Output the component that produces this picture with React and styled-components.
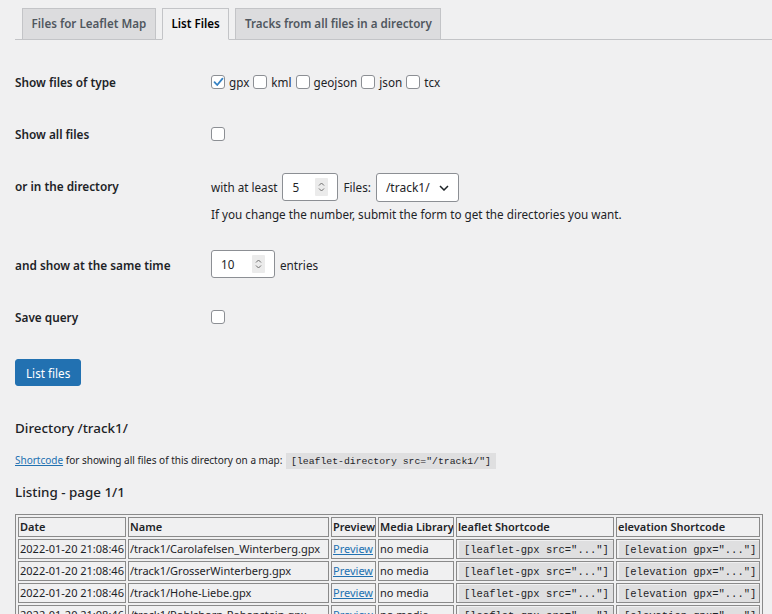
import React from "react";
import styled, { createGlobalStyle } from "styled-components";

const Global = createGlobalStyle`
  html, body { margin: 0; background: #f0f0f1; }
  body {
    font-family: "Noto Sans", "Open Sans", sans-serif;
    color: #1d2327;
    font-size: 11.7px;
  }
  * { box-sizing: border-box; }
`;

const Page = styled.div`
  padding: 8px 9px 40px 15px;
`;

const TabBar = styled.nav`
  display: flex;
  gap: 6px;
  padding-left: 7px;
  margin-right: -9px;
  border-bottom: 1px solid #c3c4c7;
`;

const Tab = styled.a`
  display: block;
  margin-bottom: -1px;
  padding: 4px 8.6px;
  line-height: 22px;
  font-size: 11.6px;
  font-weight: 600;
  text-decoration: none;
  border: 1px solid #c3c4c7;
  border-bottom-color: ${(p) => (p.$active ? "#f0f0f1" : "#c3c4c7")};
  background: ${(p) => (p.$active ? "#f0f0f1" : "#dcdcde")};
  color: ${(p) => (p.$active ? "#000" : "#50575e")};
`;

const Form = styled.form`
  margin-top: 16px;
`;

const Row = styled.div`
  display: grid;
  grid-template-columns: 196px 1fr;
  align-items: start;
  padding: 11px 0;
`;

const Label = styled.div`
  font-size: 11.8px;
  font-weight: 600;
  line-height: 30px;
`;

const Line = styled.div`
  display: flex;
  align-items: center;
  gap: ${(p) => p.$gap ?? 5}px;
  min-height: 30px;
`;

const Help = styled.p`
  margin: 1px 0 3px;
  line-height: 22px;
`;

const CheckLabel = styled.label`
  display: inline-flex;
  align-items: center;
  gap: 4px;
  line-height: 18px;
`;

const Box = styled.span`
  display: inline-flex;
  align-items: center;
  justify-content: center;
  width: 14px;
  height: 14px;
  background: #fff;
  border: 1px solid #8c8f94;
  border-radius: 3px;
`;

const NumberBox = styled.span`
  display: inline-flex;
  align-items: center;
  justify-content: space-between;
  width: ${(p) => p.$w}px;
  height: 28px;
  margin-top: ${(p) => p.$mt ?? 0}px;
  padding: 0 9px;
  background: #fff;
  border: 1px solid #8c8f94;
  border-radius: 3px;
`;

const Spinner = styled.span`
  display: inline-flex;
  align-items: center;
  justify-content: center;
  width: 13px;
  height: 18px;
  background: #ebebeb;
  border-radius: 1px;
`;

const SelectBox = styled.span`
  display: inline-flex;
  align-items: center;
  justify-content: space-between;
  width: 83px;
  height: 29px;
  margin-top: 2px;
  padding: 0 9px;
  background: #fff;
  border: 1px solid #8c8f94;
  border-radius: 3px;
  font-size: 12px;
`;

const Button = styled.button`
  display: block;
  margin-top: 16px;
  height: 27px;
  padding: 0 10px;
  background: #2271b1;
  border: 1px solid #2271b1;
  border-radius: 3px;
  color: #fff;
  font-family: "Noto Sans", sans-serif;
  font-size: 11.7px;
`;

const Heading = styled.h2`
  margin: ${(p) => p.$mt}px 0 0;
  font-size: 13.4px;
  font-weight: 500;
  line-height: 20px;
  color: #1d2327;
`;

const Note = styled.p`
  margin: 13px 0 0;
  font-size: 10px;
  line-height: 18px;
`;

const Link = styled.a`
  color: #2271b1;
  text-decoration: underline;
`;

const Code = styled.code`
  font-family: "Liberation Mono", monospace;
  font-size: ${(p) => p.$size}px;
  line-height: 1;
  background: rgba(0, 0, 0, 0.07);
  padding: 3px 5px 2px;
  margin: 0 1px;
`;

const Table = styled.table`
  margin-top: 12px;
  width: 748px;
  table-layout: fixed;
  border-collapse: separate;
  border-spacing: 2px;
  border: 1px solid #8a8a8a;
  font-size: 11px;
`;

const Th = styled.th`
  width: ${(p) => p.$w}px;
  height: 20px;
  padding: 0 1px;
  border: 1px solid #8a8a8a;
  line-height: 16px;
  font-weight: 600;
  text-align: left;
  white-space: nowrap;
  overflow: hidden;
`;

const Td = styled.td`
  height: 20px;
  padding: 0 1px;
  border: 1px solid #8a8a8a;
  line-height: 16px;
  white-space: nowrap;
  overflow: hidden;
`;

const Check = () => (
  <svg width="11" height="10" viewBox="0 0 11 10">
    <path d="M1.5 5.2 L4.2 8 L9.5 1.6" fill="none" stroke="#3582c4" strokeWidth="1.8" strokeLinecap="round" strokeLinejoin="round" />
  </svg>
);

const SpinIcon = () => (
  <svg width="7" height="12" viewBox="0 0 7 12">
    <path d="M1 4.5 L3.5 2 L6 4.5 M1 7.5 L3.5 10 L6 7.5" fill="none" stroke="#6d6d6d" strokeWidth="1" />
  </svg>
);

const Chevron = () => (
  <svg width="10" height="6" viewBox="0 0 10 6">
    <path d="M1 1 L5 5 L9 1" fill="none" stroke="#1d2327" strokeWidth="1.5" />
  </svg>
);

const Checkbox = ({ checked, children }) => (
  <CheckLabel>
    <Box>{checked && <Check />}</Box>
    {children}
  </CheckLabel>
);

const NumberInput = ({ value, w, mt }) => (
  <NumberBox $w={w} $mt={mt}>
    <span>{value}</span>
    <Spinner>
      <SpinIcon />
    </Spinner>
  </NumberBox>
);

const types = [
  ["gpx", true],
  ["kml", false],
  ["geojson", false],
  ["json", false],
  ["tcx", false],
];

const files = [
  "/track1/Carolafelsen_Winterberg.gpx",
  "/track1/GrosserWinterberg.gpx",
  "/track1/Hohe-Liebe.gpx",
  "/track1/Pohlshorn-Rabenstein.gpx",
  "/track1/Schrammsteine.gpx",
];

const cols = [
  ["Date", 108],
  ["Name", 201],
  ["Preview", 45],
  ["Media Library", 76],
  ["leaflet Shortcode", 158],
  ["elevation Shortcode", 144],
];

export default function App() {
  return (
    <>
      <Global />
      <Page>
        <TabBar>
          <Tab href="#">Files for Leaflet Map</Tab>
          <Tab href="#" $active>List Files</Tab>
          <Tab href="#">Tracks from all files in a directory</Tab>
        </TabBar>

        <Form onSubmit={(e) => e.preventDefault()}>
          <Row>
            <Label>Show files of type</Label>
            <Line $gap={4}>
              {types.map(([t, c]) => (
                <Checkbox key={t} checked={c}>{t}</Checkbox>
              ))}
            </Line>
          </Row>
          <Row>
            <Label>Show all files</Label>
            <Line>
              <Box />
            </Line>
          </Row>
          <Row>
            <Label>or in the directory</Label>
            <div>
              <Line>
                <span>with at least</span>
                <NumberInput value="5" w={56} />
                <span>Files:</span>
                <SelectBox>
                  <span>/track1/</span>
                  <Chevron />
                </SelectBox>
              </Line>
              <Help>If you change the number, submit the form to get the directories you want.</Help>
            </div>
          </Row>
          <Row>
            <Label>and show at the same time</Label>
            <Line>
              <NumberInput value="10" w={64} mt={-3} />
              <span>entries</span>
            </Line>
          </Row>
          <Row>
            <Label>Save query</Label>
            <Line>
              <Box />
            </Line>
          </Row>
          <Button type="submit">List files</Button>
        </Form>

        <Heading $mt={32}>Directory /track1/</Heading>
        <Note>
          <Link href="#">Shortcode</Link> for showing all files of this directory on a map:{" "}
          <Code $size={9.8}>[leaflet-directory src="/track1/"]</Code>
        </Note>
        <Heading $mt={13}>Listing - page 1/1</Heading>

        <Table>
          <thead>
            <tr>
              {cols.map(([c, w]) => (
                <Th key={c} $w={w}>{c}</Th>
              ))}
            </tr>
          </thead>
          <tbody>
            {files.map((f) => (
              <tr key={f}>
                <Td>2022-01-20 21:08:46</Td>
                <Td>{f}</Td>
                <Td><Link href="#">Preview</Link></Td>
                <Td>no media</Td>
                <Td><Code $size={10.5}>[leaflet-gpx src="..."]</Code></Td>
                <Td><Code $size={10.5}>[elevation gpx="..."]</Code></Td>
              </tr>
            ))}
          </tbody>
        </Table>
      </Page>
    </>
  );
}
